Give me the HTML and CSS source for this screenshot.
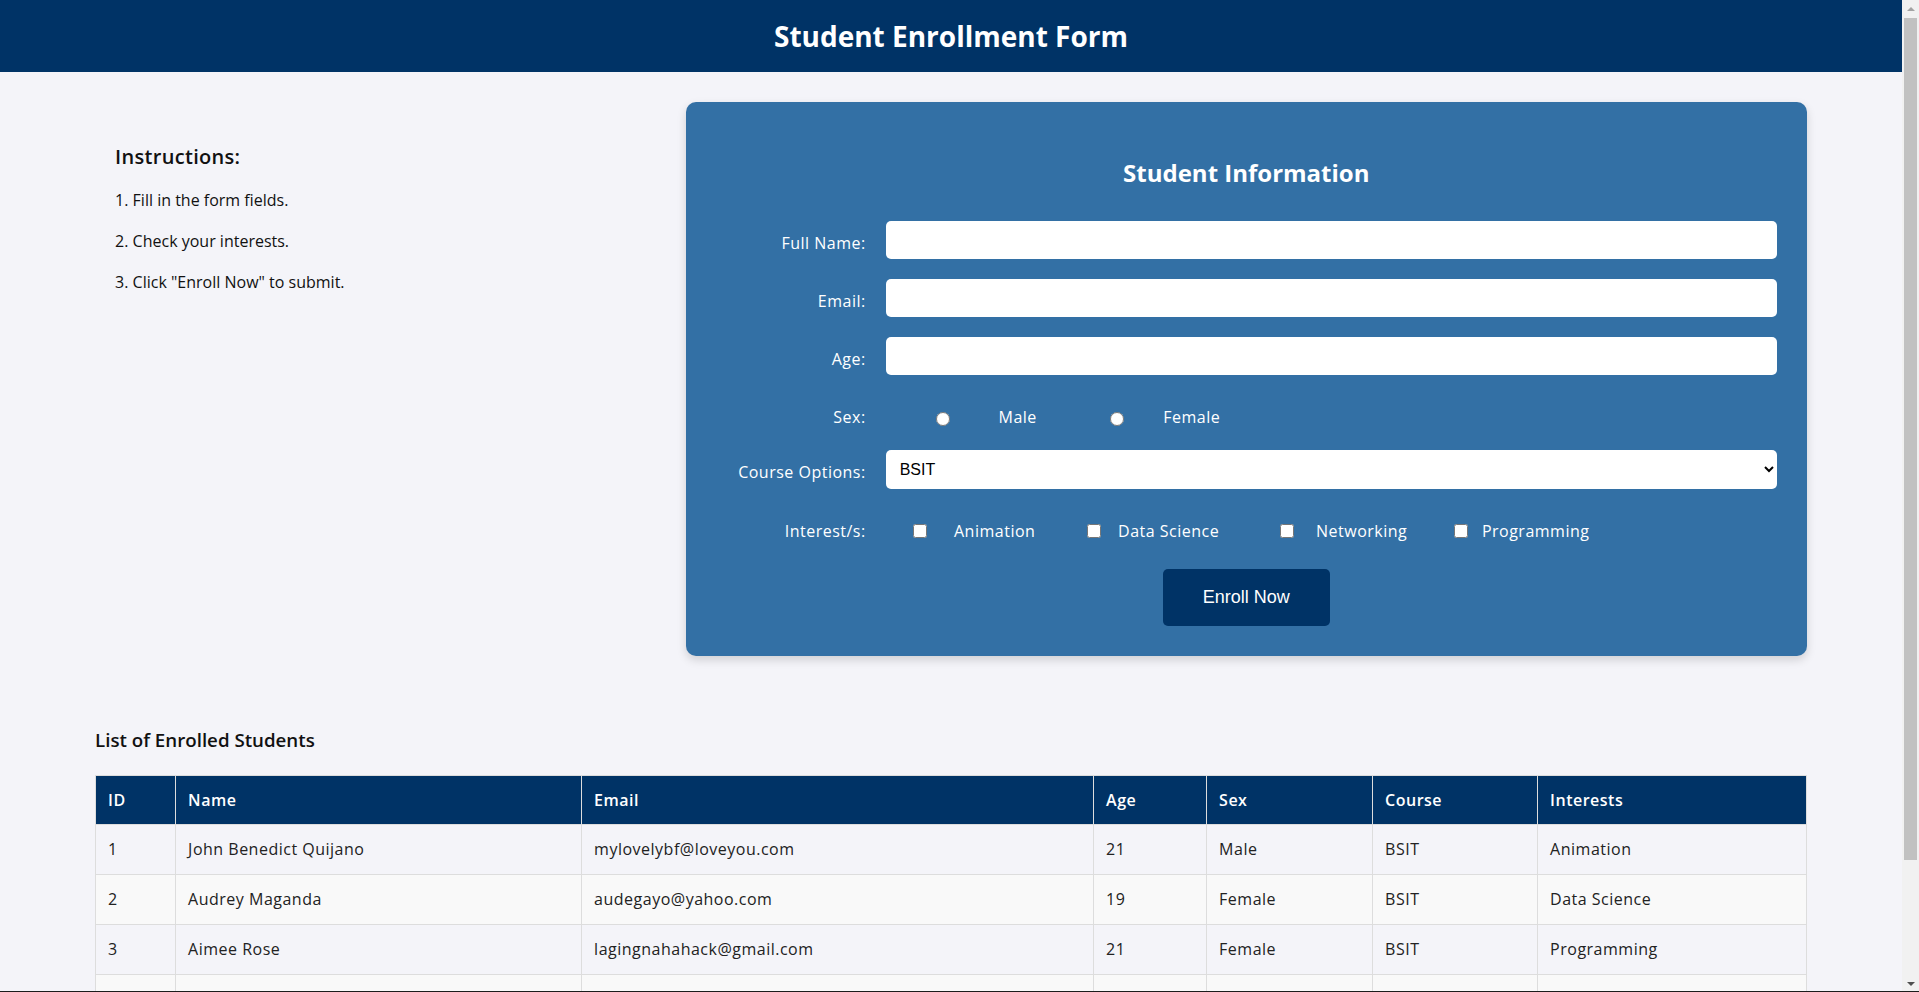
FILE: index.html
```html
<!DOCTYPE html>
<html lang="en">
<head>
<meta charset="utf-8">
<title>Student Enrollment Form</title>
<link rel="stylesheet" href="styles.css">
</head>
<body>
<header class="site-header">
  <h1>Student Enrollment Form</h1>
</header>
<main class="container">
  <section class="top">
    <aside class="instructions">
      <h3>Instructions:</h3>
      <p>1. Fill in the form fields.</p>
      <p>2. Check your interests.</p>
      <p>3. Click "Enroll Now" to submit.</p>
    </aside>
    <form class="card">
      <h2>Student Information</h2>
      <div class="row">
        <label class="lbl" for="fullname">Full Name:</label>
        <input class="field" id="fullname" type="text">
      </div>
      <div class="row">
        <label class="lbl" for="email">Email:</label>
        <input class="field" id="email" type="email">
      </div>
      <div class="row">
        <label class="lbl" for="age">Age:</label>
        <input class="field" id="age" type="number">
      </div>
      <div class="row row-sex">
        <span class="lbl">Sex:</span>
        <div class="opts opts-sex">
          <label class="opt"><input class="radio" type="radio" name="sex"><span class="opt-text">Male</span></label>
          <label class="opt"><input class="radio" type="radio" name="sex"><span class="opt-text">Female</span></label>
        </div>
      </div>
      <div class="row">
        <label class="lbl" for="course">Course Options:</label>
        <select class="field select" id="course">
          <option>BSIT</option>
          <option>BSCS</option>
          <option>BSIS</option>
        </select>
      </div>
      <div class="row row-int">
        <span class="lbl">Interest/s:</span>
        <div class="opts opts-int">
          <label class="opt"><input class="check" type="checkbox"><span class="opt-text">Animation</span></label>
          <label class="opt opt-wide"><input class="check" type="checkbox"><span class="opt-text">Data Science</span></label>
          <label class="opt"><input class="check" type="checkbox"><span class="opt-text">Networking</span></label>
          <label class="opt"><input class="check" type="checkbox"><span class="opt-text">Programming</span></label>
        </div>
      </div>
      <div class="actions">
        <button class="btn" type="button">Enroll Now</button>
      </div>
    </form>
  </section>

  <section class="list">
    <h3>List of Enrolled Students</h3>
    <table class="students">
      <colgroup>
        <col class="c-id"><col class="c-name"><col class="c-email"><col class="c-age"><col class="c-sex"><col class="c-course"><col class="c-int">
      </colgroup>
      <thead>
        <tr><th>ID</th><th>Name</th><th>Email</th><th>Age</th><th>Sex</th><th>Course</th><th>Interests</th></tr>
      </thead>
      <tbody>
        <tr><td>1</td><td>John Benedict Quijano</td><td>mylovelybf@loveyou.com</td><td>21</td><td>Male</td><td>BSIT</td><td>Animation</td></tr>
        <tr><td>2</td><td>Audrey Maganda</td><td>audegayo@yahoo.com</td><td>19</td><td>Female</td><td>BSIT</td><td>Data Science</td></tr>
        <tr><td>3</td><td>Aimee Rose</td><td>lagingnahahack@gmail.com</td><td>21</td><td>Female</td><td>BSIT</td><td>Programming</td></tr>
        <tr><td>4</td><td>Mark Anthony Reyes</td><td>markreyes@gmail.com</td><td>20</td><td>Male</td><td>BSIT</td><td>Networking</td></tr>
        <tr><td>5</td><td>Kristine Joy Santos</td><td>kjsantos@yahoo.com</td><td>19</td><td>Female</td><td>BSIT</td><td>Animation</td></tr>
      </tbody>
    </table>
  </section>
</main>

<div class="scrollbar" aria-hidden="true">
  <div class="sb-btn sb-up"><span class="tri tri-up"></span></div>
  <div class="sb-track"><div class="sb-thumb"></div></div>
  <div class="sb-btn sb-down"><span class="tri tri-down"></span></div>
</div>
<div class="frame-edge" aria-hidden="true"></div>
</body>
</html>
```

FILE: styles.css
```css
* {
  box-sizing: border-box;
}

html,
body {
  overflow: hidden;
}

body {
  margin: 0;
  padding-right: 17px;
  background: #f4f4f9;
  font-family: "Open Sans", "Noto Sans", Arial, sans-serif;
  color: #111;
}

.site-header {
  background: #003366;
  color: #fff;
  text-align: center;
  padding: 15px 0;
}

.site-header h1 {
  margin: 0;
  font-size: 28px;
  line-height: 42px;
  font-weight: 700;
}

.container {
  width: 90%;
  margin: 30px auto 53px;
}

.top {
  display: grid;
  grid-template-columns: 1fr 2fr;
  column-gap: 30px;
  align-items: start;
}

.instructions {
  padding: 20px;
}

.instructions h3 {
  margin: 20px 0 16px;
  font-size: 20px;
  line-height: 30px;
  font-weight: 600;
  letter-spacing: 0.3px;
}

.instructions p {
  margin: 16px 0;
  font-size: 16px;
  line-height: 25px;
}

.card {
  background: #3370a5;
  border-radius: 10px;
  padding: 30px;
  box-shadow: 0 4px 10px rgba(0, 0, 0, 0.15);
  color: #fff;
}

.card h2 {
  margin: 23px 0 30px;
  font-size: 24px;
  line-height: 36px;
  font-weight: 700;
  text-align: center;
}

.row {
  display: grid;
  grid-template-columns: 150px 1fr;
  column-gap: 20px;
  margin-bottom: 20px;
}

.row-sex {
  min-height: 35px;
}

.row-int {
  min-height: 40px;
}

.lbl {
  text-align: right;
  padding-top: 10px;
  font-size: 16px;
  line-height: 24px;
  letter-spacing: 0.5px;
}

.field {
  width: 100%;
  height: 38px;
  padding: 10px;
  border: none;
  border-radius: 5px;
  background: #fff;
  font-family: Arial, "Liberation Sans", sans-serif;
  font-size: 16px;
  color: #000;
}

.select {
  height: 39px;
}

.opts {
  display: flex;
  align-items: flex-start;
  padding-top: 10px;
  gap: 24px;
}

.opts-sex {
  padding-left: 40px;
}

.opts-int {
  padding-left: 17px;
}

.opt {
  display: grid;
  grid-template-columns: 34px 116px;
  align-items: center;
  height: 24px;
  font-size: 16px;
  line-height: 24px;
  letter-spacing: 0.5px;
}

.opt-wide {
  margin-right: 19px;
}

.opt-text {
  justify-self: center;
  white-space: nowrap;
}

.radio,
.check {
  justify-self: center;
  margin: 0;
  width: 14px;
  height: 14px;
}

.radio {
  margin-top: 4px;
}

.actions {
  display: flex;
  justify-content: center;
}

.btn {
  background: #003366;
  color: #fff;
  border: none;
  border-radius: 5px;
  padding: 18px 40px;
  font-family: Arial, "Liberation Sans", sans-serif;
  font-size: 18px;
  line-height: 20.7px;
  cursor: pointer;
}

.list {
  margin-top: 70px;
}

.list h3 {
  margin: 0 0 21px;
  font-size: 18.72px;
  line-height: 28px;
  font-weight: 600;
}

.students {
  width: 100%;
  border-collapse: collapse;
  table-layout: fixed;
  font-size: 16px;
  letter-spacing: 0.5px;
}

.c-id { width: 80px; }
.c-name { width: 406px; }
.c-email { width: 512px; }
.c-age { width: 113px; }
.c-sex { width: 166px; }
.c-course { width: 165px; }

.students th,
.students td {
  border: 1px solid #ddd;
  padding: 12px;
  text-align: left;
}

.students th {
  background: #003366;
  color: #fff;
  font-weight: 600;
  line-height: 24px;
}

.students td {
  line-height: 25px;
  color: #222;
}

.students tbody tr:nth-child(even) {
  background: #f9f9f9;
}

/* classic scrollbar drawn over the right edge */
.scrollbar {
  position: fixed;
  top: 0;
  right: 0;
  width: 17px;
  height: 100vh;
  display: flex;
  flex-direction: column;
  background: #f1f1f1;
}

.sb-btn {
  height: 17px;
  flex: none;
  display: flex;
  align-items: center;
  justify-content: center;
}

.sb-track {
  flex: 1;
  padding: 1px 2px;
}

.sb-thumb {
  height: 842px;
  background: #c1c1c1;
}

.tri {
  width: 0;
  height: 0;
  border-left: 4px solid transparent;
  border-right: 4px solid transparent;
}

.tri-up {
  border-bottom: 4px solid #a3a3a3;
}

.tri-down {
  border-top: 4px solid #505050;
}

/* dark window edge along the bottom of the frame */
.frame-edge {
  position: fixed;
  left: 0;
  right: 0;
  bottom: 0;
  height: 1px;
  background: #1c1c1c;
}
```
